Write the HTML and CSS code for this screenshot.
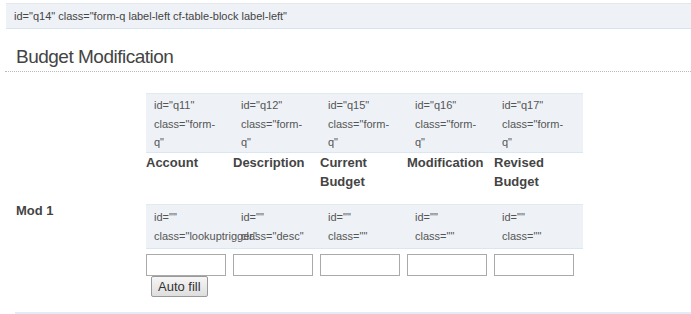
FILE: index.html
```html
<!DOCTYPE html>
<html>
<head>
<meta charset="utf-8">
<link rel="stylesheet" href="styles.css">
</head>
<body>
<div class="qbar">id="q14" class="form-q label-left cf-table-block label-left"</div>
<h2 class="heading">Budget Modification</h2>
<div class="content">
  <div class="row">
    <div class="side"></div>
    <div class="fields">
      <div class="cells head">
        <div class="cell"><span class="ln">id="q11"</span><span class="ln">class="form-q"</span></div>
        <div class="cell"><span class="ln">id="q12"</span><span class="ln">class="form-q"</span></div>
        <div class="cell"><span class="ln">id="q15"</span><span class="ln">class="form-q"</span></div>
        <div class="cell"><span class="ln">id="q16"</span><span class="ln">class="form-q"</span></div>
        <div class="cell"><span class="ln">id="q17"</span><span class="ln">class="form-q"</span></div>
      </div>
      <div class="labels">
        <div class="lbl">Account</div>
        <div class="lbl">Description</div>
        <div class="lbl">Current Budget</div>
        <div class="lbl">Modification</div>
        <div class="lbl">Revised Budget</div>
      </div>
    </div>
  </div>
  <div class="row mod">
    <div class="side">Mod 1</div>
    <div class="fields">
      <div class="cells sub">
        <div class="cell"><span class="ln">id=""</span><span class="ln">class="lookuptrigger"</span></div>
        <div class="cell"><span class="ln">id=""</span><span class="ln">class="desc"</span></div>
        <div class="cell"><span class="ln">id=""</span><span class="ln">class=""</span></div>
        <div class="cell"><span class="ln">id=""</span><span class="ln">class=""</span></div>
        <div class="cell"><span class="ln">id=""</span><span class="ln">class=""</span></div>
      </div>
      <div class="inputs">
        <div class="icell"><input type="text" class="inp"><button class="btn">Auto fill</button></div>
        <div class="icell"><input type="text" class="inp"></div>
        <div class="icell"><input type="text" class="inp"></div>
        <div class="icell"><input type="text" class="inp"></div>
        <div class="icell"><input type="text" class="inp"></div>
      </div>
    </div>
  </div>
</div>
<div class="next"></div>
</body>
</html>
```
FILE: styles.css
```css
html, body {
  margin: 0;
  padding: 0;
  background: #fff;
  font-family: "Liberation Sans", Arial, sans-serif;
}
.qbar {
  margin: 3px 0 0 6px;
  height: 24px;
  line-height: 24px;
  padding-left: 8px;
  font-size: 11px;
  color: #444;
  background: #eef2f7;
  border-top: 1px solid #e3e7ec;
  border-bottom: 1px solid #d7e5f3;
}
.heading {
  margin: 16px 0 0 5px;
  padding: 0 0 2px 11px;
  font-size: 19px;
  letter-spacing: -0.5px;
  line-height: 24px;
  font-weight: normal;
  color: #444;
  border-bottom: 1px dotted #bbb;
}
.content {
  padding-left: 16px;
  margin-top: 21px;
}
.row {
  display: grid;
  grid-template-columns: 130px 437px;
}
.side {
  font-size: 13px;
  font-weight: bold;
  line-height: 13px;
  color: #444;
}
.cells,
.labels,
.inputs {
  display: grid;
  grid-template-columns: repeat(4, 87px) 89px;
}
.cells {
  background: #eef2f7;
  border-top: 1px solid #e4e9ef;
  border-bottom: 1px solid #d9e6f3;
  font-size: 11px;
  color: #555;
}
.cells.head {
  padding-top: 2px;
  line-height: 18.5px;
}
.cells.sub {
  padding: 3px 0 2px;
  line-height: 19px;
}
.cell {
  padding: 0 10px 0 8px;
  min-width: 0;
}
.ln {
  display: block;
}
.labels {
  font-size: 13px;
  font-weight: bold;
  line-height: 19px;
  color: #444;
}
.lbl {
  padding-right: 6px;
}
.row.mod {
  margin-top: 13px;
}
.inputs {
  margin-top: 5px;
}
.icell {
  display: flex;
  flex-direction: column;
  align-items: flex-start;
}
.inp {
  width: 80px;
  height: 22px;
  box-sizing: border-box;
  margin: 0;
  padding: 0 2px;
  border: 1px solid #aaa;
  background: #fff;
  font-size: 13px;
}
.btn {
  margin: 0 0 0 5px;
  height: 21px;
  box-sizing: border-box;
  padding: 0 6px;
  font-family: "Liberation Sans", Arial, sans-serif;
  font-size: 13px;
  line-height: 19px;
  color: #333;
  border: 1px solid #999;
  border-radius: 2px;
  background: linear-gradient(#f6f6f6, #dedede);
}
.next {
  margin: 15px 0 0 15px;
  height: 0;
  border-top: 2px solid #e2ecf6;
}
```
